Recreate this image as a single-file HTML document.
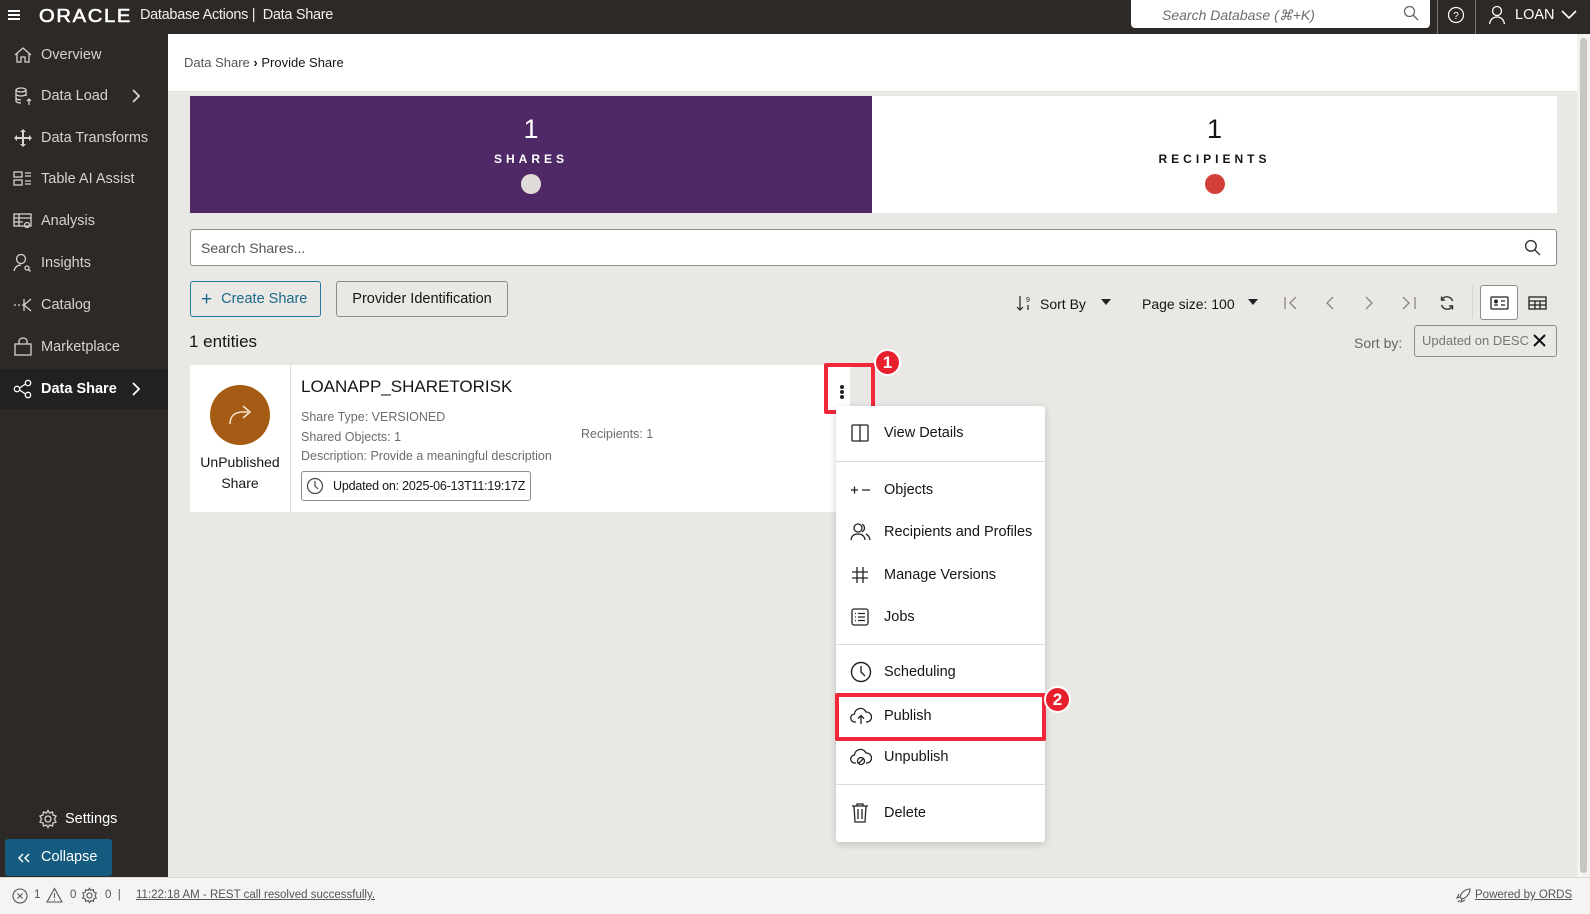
<!DOCTYPE html>
<html><head><meta charset="utf-8"><style>
*{box-sizing:border-box;margin:0;padding:0}
body{width:1590px;height:914px;overflow:hidden;font-family:"Liberation Sans",sans-serif;background:#eae8e5;position:relative;color:#161513}
.abs{position:absolute}
#top{left:0;top:0;width:1590px;height:34px;background:#2c2926;color:#fff}
#side{left:0;top:34px;width:168px;height:843px;background:#2c2926;color:#d6d2ce;font-size:14.5px}
.si{position:absolute;left:0;width:168px;height:40px;display:flex;align-items:center}
.si svg{position:absolute;left:13px}
.si span{position:absolute;left:41px}
.si .ch{position:absolute;left:133px;top:12px}
#status{left:0;top:877px;width:1590px;height:37px;background:#f5f4f2;border-top:1px solid #dcdad7;font-size:11.5px;color:#555}
.mi{position:absolute;left:0;width:209px;height:40px;display:flex;align-items:center;font-size:14.5px;color:#161513}
.mi svg{position:absolute;left:14px}
.mi span{position:absolute;left:48px}
.sep{position:absolute;left:0;width:209px;height:1px;background:#dedcd9}
.badge{position:absolute;width:27px;height:27px;border-radius:50%;background:#e8202e;color:#fff;font-weight:bold;font-size:17px;text-align:center;line-height:24px;border:2px solid #fff}
.rbox{position:absolute;border:4px solid #f0283a;border-radius:2px}
</style></head><body>
<div id="top" class="abs">
 <div class="abs" style="left:8px;top:10px;width:12px;height:2px;background:#fff;box-shadow:0 4px 0 #fff,0 8px 0 #fff"></div>
 <div class="abs" style="left:39px;top:6px;font-size:18px;letter-spacing:1.5px;transform:scaleX(1.12);transform-origin:left;-webkit-text-stroke:0.6px #fff">ORACLE</div>
 <div class="abs" style="left:140px;top:7px;font-size:14.5px;color:#f0eeeb;letter-spacing:-0.3px">Database Actions |&nbsp; Data Share</div>
 <div class="abs" style="left:1131px;top:0;width:299px;height:28px;background:#fff;border-radius:0 0 4px 4px"></div>
 <div class="abs" style="left:1162px;top:7px;font-size:14px;font-style:italic;color:#6f6c69">Search Database (⌘+K)</div>
 <svg class="abs" style="left:1403px;top:5px" width="16" height="16" viewBox="0 0 16 16" fill="none" stroke="#666" stroke-width="1.3"><circle cx="6.5" cy="6.5" r="5"/><path d="M10 10l5 5"/></svg>
 <div class="abs" style="left:1437px;top:0;width:1px;height:34px;background:#777"></div>
 <svg class="abs" style="left:1447px;top:6px" width="18" height="18" viewBox="0 0 18 18" fill="none" stroke="#fff" stroke-width="1.2"><circle cx="9" cy="9" r="7.5"/><text x="9" y="13" font-size="10" text-anchor="middle" fill="#fff" stroke="none" font-family="Liberation Sans">?</text></svg>
 <div class="abs" style="left:1475px;top:0;width:1px;height:34px;background:#777"></div>
 <svg class="abs" style="left:1488px;top:5px" width="18" height="20" viewBox="0 0 18 20" fill="none" stroke="#fff" stroke-width="1.3"><circle cx="9" cy="6" r="4.5"/><path d="M1.5 19c1-5 4-7 7.5-7s6.5 2 7.5 7"/></svg>
 <div class="abs" style="left:1515px;top:7px;font-size:14.5px">LOAN</div>
 <svg class="abs" style="left:1560px;top:9px" width="18" height="12" viewBox="0 0 18 12" fill="none" stroke="#fff" stroke-width="1.6"><path d="M2 2l7 7 7-7"/></svg>
</div>

<div id="side" class="abs">
 <div class="si" style="top:1px"><svg width="20" height="20" viewBox="0 0 20 20" fill="none" stroke="#d6d2ce" stroke-width="1.3"><path d="M2 10L10 3l8 7M4 8.5V17h4v-5h4v5h4V8.5"/></svg><span>Overview</span></div>
 <div class="si" style="top:42px"><svg width="20" height="20" viewBox="0 0 20 20" fill="none" stroke="#d6d2ce" stroke-width="1.3"><ellipse cx="8" cy="4" rx="5" ry="2"/><path d="M3 4v11c0 1 2 2 5 2M13 4v6M3 8c0 1 2 2 5 2s5-1 5-2M3 12c0 1 2 2 5 2"/><path d="M16 19v-6M14 15l2-2 2 2"/></svg><span>Data Load</span><svg class="ch" width="10" height="16" viewBox="0 0 10 16" fill="none" stroke="#d6d2ce" stroke-width="1.8" style="left:131px"><path d="M2 2l6 6-6 6"/></svg></div>
 <div class="si" style="top:84px"><svg width="20" height="20" viewBox="0 0 20 20" fill="#d6d2ce"><path d="M10 1l3 3h-2v5h5V7l3 3-3 3v-2h-5v5h2l-3 3-3-3h2v-5H4v2l-3-3 3-3v2h5V4H7z"/></svg><span>Data Transforms</span></div>
 <div class="si" style="top:125px"><svg width="20" height="20" viewBox="0 0 20 20" fill="none" stroke="#d6d2ce" stroke-width="1.3"><rect x="1" y="3" width="8" height="5"/><rect x="1" y="11" width="8" height="5"/><path d="M12 4h6M12 7h6M12 12h6M12 15h6"/></svg><span>Table AI Assist</span></div>
 <div class="si" style="top:167px"><svg width="20" height="20" viewBox="0 0 20 20" fill="none" stroke="#d6d2ce" stroke-width="1.3"><rect x="1" y="3" width="17" height="12"/><path d="M1 7h17M6 3v12M1 11h9"/><circle cx="14" cy="14" r="2.5"/></svg><span>Analysis</span></div>
 <div class="si" style="top:209px"><svg width="20" height="20" viewBox="0 0 20 20" fill="none" stroke="#d6d2ce" stroke-width="1.3"><circle cx="8" cy="6" r="4.5"/><path d="M1 18c1-4 3-6 7-6"/><circle cx="14" cy="15" r="2"/><path d="M15.5 16.5l2 2"/></svg><span>Insights</span></div>
 <div class="si" style="top:251px"><svg width="20" height="20" viewBox="0 0 20 20" fill="none" stroke="#d6d2ce" stroke-width="1.3"><path d="M1 10h2M5 10h2M9 10h2M11 4v12M18 4l-7 6 7 6"/></svg><span>Catalog</span></div>
 <div class="si" style="top:293px"><svg width="20" height="20" viewBox="0 0 20 20" fill="none" stroke="#d6d2ce" stroke-width="1.3"><rect x="2" y="7" width="16" height="11"/><path d="M6 7V4a4 3 0 0 1 8 0v3"/></svg><span>Marketplace</span></div>
 <div class="si" style="top:335px;background:#222020;color:#fff"><svg width="20" height="20" viewBox="0 0 20 20" fill="none" stroke="#fff" stroke-width="1.3"><circle cx="4" cy="10" r="2.7"/><circle cx="15" cy="4" r="2.7"/><circle cx="15" cy="16" r="2.7"/><path d="M6.5 9l6-4M6.5 11l6 4"/></svg><span style="font-weight:bold">Data Share</span><svg class="ch" width="10" height="16" viewBox="0 0 10 16" fill="none" stroke="#fff" stroke-width="1.8" style="left:131px"><path d="M2 2l6 6-6 6"/></svg></div>
 <svg class="abs" style="left:38px;top:775px" width="20" height="20" viewBox="0 0 20 20" fill="none" stroke="#d6d2ce" stroke-width="1.3"><circle cx="10" cy="10" r="3"/><path d="M10 1.5l1.5 2.5 3-1 .5 3 3 1-1.5 3 1.5 3-3 1-.5 3-3-1-1.5 2.5-1.5-2.5-3 1-.5-3-3-1 1.5-3-1.5-3 3-1 .5-3 3 1z"/></svg>
 <div class="abs" style="left:65px;top:777px;color:#fff">Settings</div>
 <div class="abs" style="left:5px;top:805px;width:107px;height:37px;background:#155b7f;border-radius:3px;color:#fff;font-size:14.5px;line-height:37px"><svg class="abs" style="left:12px;top:14px" width="14" height="10" viewBox="0 0 14 10" fill="none" stroke="#fff" stroke-width="1.5"><path d="M6 1L2 5l4 4M12 1L8 5l4 4"/></svg><span style="position:absolute;left:36px">Collapse</span></div>
</div>

<!-- main header -->
<div class="abs" style="left:168px;top:34px;width:1409px;height:58px;background:#fff;border-bottom:1px solid #e3e1de"></div>
<div class="abs" style="left:184px;top:55px;font-size:13px;color:#555">Data Share <b style="color:#222">&#x203A;</b> <span style="color:#161513">Provide Share</span></div>
<div class="abs" style="left:1577px;top:34px;width:13px;height:843px;background:#f3f2f0"></div>
<div class="abs" style="left:1580px;top:38px;width:7px;height:835px;background:#c8c6c3;border-radius:4px"></div>

<!-- stats -->
<div class="abs" style="left:190px;top:96px;width:682px;height:117px;background:#4f2966;color:#fff;text-align:center">
 <div style="font-size:27px;margin-top:18px">1</div>
 <div style="font-size:12px;font-weight:bold;letter-spacing:4px;margin-top:7px">SHARES</div>
 <div style="width:20px;height:20px;border-radius:50%;background:#e0dcd8;margin:8px auto 0"></div>
</div>
<div class="abs" style="left:872px;top:96px;width:685px;height:117px;background:#fff;text-align:center">
 <div style="font-size:27px;margin-top:18px">1</div>
 <div style="font-size:12px;font-weight:bold;letter-spacing:4px;margin-top:7px">RECIPIENTS</div>
 <div style="width:20px;height:20px;border-radius:50%;background:#d2403a;margin:8px auto 0"></div>
</div>

<!-- search -->
<div class="abs" style="left:190px;top:229px;width:1367px;height:37px;background:#fff;border:1px solid #8f8c89;border-radius:3px"></div>
<div class="abs" style="left:201px;top:240px;font-size:14px;color:#555">Search Shares...</div>
<svg class="abs" style="left:1524px;top:239px" width="17" height="17" viewBox="0 0 16 16" fill="none" stroke="#333" stroke-width="1.3"><circle cx="6.5" cy="6.5" r="5"/><path d="M10 10l5 5"/></svg>

<!-- buttons -->
<div class="abs" style="left:190px;top:281px;width:131px;height:36px;border:1px solid #227e9e;border-radius:3px;color:#1a6a8a;font-size:14.5px;line-height:34px"><span style="margin-left:10px;font-size:19px;vertical-align:-2px">+</span><span style="margin-left:9px">Create Share</span></div>
<div class="abs" style="left:336px;top:281px;width:172px;height:36px;border:1px solid #8f8c89;border-radius:3px;font-size:14.5px;line-height:34px;text-align:center">Provider Identification</div>

<!-- toolbar right -->
<svg class="abs" style="left:1015px;top:294px" width="18" height="18" viewBox="0 0 18 18" fill="none" stroke="#222" stroke-width="1.2"><path d="M5 2v14M2 13l3 3 3-3"/><text x="11" y="8" font-size="7" fill="#222" stroke="none" font-family="Liberation Sans">9</text><path d="M13 11v5"/></svg>
<div class="abs" style="left:1040px;top:296px;font-size:14px">Sort By</div>
<svg class="abs" style="left:1101px;top:299px" width="10" height="6"><path d="M0 0h10L5 6z" fill="#222"/></svg>
<div class="abs" style="left:1142px;top:296px;font-size:14px">Page size: 100</div>
<svg class="abs" style="left:1248px;top:299px" width="10" height="6"><path d="M0 0h10L5 6z" fill="#222"/></svg>
<svg class="abs" style="left:1282px;top:294px" width="160" height="18" viewBox="0 0 160 18" fill="none" stroke="#8a8784" stroke-width="1.3"><path d="M3 3v12M14 3l-6 6 6 6M51 3l-6 6 6 6M84 3l6 6-6 6M121 3l6 6-6 6M133 3v12"/></svg>
<svg class="abs" style="left:1438px;top:294px" width="18" height="18" viewBox="0 0 18 18" fill="none" stroke="#333" stroke-width="1.4"><path d="M14.5 7A6 6 0 0 0 3.5 6M3.5 11a6 6 0 0 0 11 1M3.5 2.5v3.5H7M14.5 15.5V12H11"/></svg>
<div class="abs" style="left:1472px;top:285px;width:1px;height:33px;background:#d8d6d3"></div>
<div class="abs" style="left:1480px;top:285px;width:38px;height:35px;background:#fff;border:1px solid #8f8c89;border-radius:3px"></div>
<svg class="abs" style="left:1490px;top:296px" width="19" height="14" viewBox="0 0 19 14" fill="none" stroke="#222" stroke-width="1.3"><rect x="1" y="1" width="17" height="12" rx="1"/><path d="M4 9h4M11 5h4M11 9h4"/><circle cx="6" cy="5.5" r="1.3" fill="#222"/></svg>
<svg class="abs" style="left:1528px;top:296px" width="19" height="14" viewBox="0 0 19 14" fill="none" stroke="#222" stroke-width="1.3"><rect x="1" y="1" width="17" height="12"/><path d="M1 5h17M1 9h17M7 5v8M12 5v8"/></svg>
<div class="abs" style="left:1354px;top:335px;font-size:14px;color:#666">Sort by:</div>
<div class="abs" style="left:1414px;top:325px;width:143px;height:32px;border:1px solid #8f8c89;border-radius:3px;font-size:13px;color:#777;line-height:30px;padding-left:7px;white-space:nowrap">Updated on DESC</div>
<svg class="abs" style="left:1533px;top:334px" width="13" height="13" viewBox="0 0 13 13" stroke="#111" stroke-width="2"><path d="M1 1l11 11M12 1L1 12"/></svg>

<div class="abs" style="left:189px;top:332px;font-size:17px">1 entities</div>

<!-- card -->
<div class="abs" style="left:190px;top:365px;width:660px;height:147px;background:#fff"></div>
<div class="abs" style="left:290px;top:365px;width:1px;height:147px;background:#e0dedb"></div>
<div class="abs" style="left:210px;top:385px;width:60px;height:60px;border-radius:50%;background:#a55b13"></div>
<svg class="abs" style="left:225px;top:400px" width="30" height="30" viewBox="0 0 30 30" fill="none" stroke="#f3e3cf" stroke-width="1.6"><path d="M5 24c0-8 5-12 13-12h5M18 6l7 6-7 6"/></svg>
<div class="abs" style="left:190px;top:452px;width:100px;text-align:center;font-size:14px;line-height:21px">UnPublished<br>Share</div>
<div class="abs" style="left:301px;top:377px;font-size:17px">LOANAPP_SHARETORISK</div>
<div class="abs" style="left:301px;top:408px;font-size:12.5px;color:#6f6c69;line-height:19.5px">Share Type: VERSIONED<br>Shared Objects: 1<br>Description: Provide a meaningful description</div>
<div class="abs" style="left:581px;top:427px;font-size:12.5px;color:#6f6c69">Recipients: 1</div>
<div class="abs" style="left:301px;top:471px;width:230px;height:30px;border:1px solid #8f8c89;border-radius:3px;font-size:12.5px;line-height:28px;padding-left:31px;white-space:nowrap;letter-spacing:-0.2px">Updated on: 2025-06-13T11:19:17Z</div>
<svg class="abs" style="left:306px;top:477px" width="18" height="18" viewBox="0 0 18 18" fill="none" stroke="#444" stroke-width="1.2"><circle cx="9" cy="9" r="7.5"/><path d="M9 4v5l3 3"/></svg>

<!-- kebab + box 1 -->
<div class="abs" style="left:840px;top:385px;width:4px;height:4px;border-radius:50%;background:#222;box-shadow:0 5px 0 #222,0 10px 0 #222"></div>
<div class="rbox" style="left:824px;top:363px;width:51px;height:51px"></div>
<div class="badge" style="left:874px;top:349px">1</div>

<!-- menu -->
<div class="abs" style="left:836px;top:406px;width:209px;height:436px;background:#fff;border-radius:3px;box-shadow:0 2px 8px rgba(0,0,0,.18)">
 <div class="mi" style="top:7px"><svg width="20" height="20" viewBox="0 0 20 20" fill="none" stroke="#222" stroke-width="1.3"><rect x="2" y="2" width="16" height="16" rx="1"/><path d="M10 2v16"/></svg><span>View Details</span></div>
 <div class="sep" style="top:55px"></div>
 <div class="mi" style="top:64px"><svg width="22" height="20" viewBox="0 0 22 20" fill="none" stroke="#222" stroke-width="1.3"><path d="M1 10h7M4.5 6.5v7M12 10h8"/></svg><span>Objects</span></div>
 <div class="mi" style="top:106px"><svg width="22" height="20" viewBox="0 0 22 20" fill="none" stroke="#222" stroke-width="1.3"><circle cx="8" cy="6" r="4"/><path d="M1 18c.5-4 3-6 7-6s6.5 2 7 6"/><path d="M12 2.3a4 4 0 0 1 0 7.4M16 12c2 1 3.5 3 4 6"/></svg><span>Recipients and Profiles</span></div>
 <div class="mi" style="top:149px"><svg width="20" height="20" viewBox="0 0 20 20" fill="none" stroke="#222" stroke-width="1.3"><path d="M7 2v16M13 2v16M2 7h16M2 13h16"/></svg><span>Manage Versions</span></div>
 <div class="mi" style="top:191px"><svg width="20" height="20" viewBox="0 0 20 20" fill="none" stroke="#222" stroke-width="1.3"><rect x="2" y="2" width="16" height="16" rx="2"/><path d="M5 6.5h1M8 6.5h7M5 10h1M8 10h7M5 13.5h1M8 13.5h7"/></svg><span>Jobs</span></div>
 <div class="sep" style="top:238px"></div>
 <div class="mi" style="top:246px"><svg width="22" height="22" viewBox="0 0 22 22" fill="none" stroke="#222" stroke-width="1.4"><circle cx="11" cy="11" r="9.5"/><path d="M11 5v6l4 4"/></svg><span>Scheduling</span></div>
 <div class="mi" style="top:290px"><svg width="22" height="20" viewBox="0 0 22 20" fill="none" stroke="#222" stroke-width="1.3"><path d="M6 16H5a4 4 0 0 1-.5-8A6 6 0 0 1 16 6a4.5 4.5 0 0 1 1 10h-1"/><path d="M11 18v-8M8 12.5l3-3 3 3"/></svg><span>Publish</span></div>
 <div class="mi" style="top:331px"><svg width="22" height="20" viewBox="0 0 22 20" fill="none" stroke="#222" stroke-width="1.3"><path d="M6 16H5a4 4 0 0 1-.5-8A6 6 0 0 1 16 6a4.5 4.5 0 0 1 1 10h-1"/><circle cx="11" cy="14" r="3.5"/><path d="M8.5 16.5l5-5"/></svg><span>Unpublish</span></div>
 <div class="sep" style="top:378px"></div>
 <div class="mi" style="top:387px"><svg width="20" height="22" viewBox="0 0 20 22" fill="none" stroke="#222" stroke-width="1.3"><path d="M2 4h16M7 4V2h6v2M4 4l1 16h10l1-16M8 7v10M12 7v10"/></svg><span>Delete</span></div>
</div>
<div class="rbox" style="left:835px;top:693px;width:211px;height:48px"></div>
<div class="badge" style="left:1044px;top:686px">2</div>

<!-- status -->
<div id="status" class="abs">
 <svg class="abs" style="left:12px;top:10px" width="16" height="16" viewBox="0 0 16 16" fill="none" stroke="#555" stroke-width="1.1"><circle cx="8" cy="8" r="7"/><path d="M5.5 5.5l5 5M10.5 5.5l-5 5"/></svg>
 <span class="abs" style="left:34px;top:11px">1</span>
 <svg class="abs" style="left:46px;top:9px" width="17" height="16" viewBox="0 0 17 16" fill="none" stroke="#555" stroke-width="1.1"><path d="M8.5 1.5L16 15H1z M8.5 6v5M8.5 12.5v1"/></svg>
 <span class="abs" style="left:70px;top:11px">0</span>
 <svg class="abs" style="left:81px;top:9px" width="17" height="17" viewBox="0 0 20 20" fill="none" stroke="#555" stroke-width="1.3"><circle cx="10" cy="10" r="3"/><path d="M10 1.5l1.5 2.5 3-1 .5 3 3 1-1.5 3 1.5 3-3 1-.5 3-3-1-1.5 2.5-1.5-2.5-3 1-.5-3-3-1 1.5-3-1.5-3 3-1 .5-3 3 1z"/></svg>
 <span class="abs" style="left:105px;top:11px">0 &nbsp;|</span>
 <span class="abs" style="left:136px;top:11px;text-decoration:underline">11:22:18 AM - REST call resolved successfully.</span>
 <svg class="abs" style="left:1456px;top:10px" width="15" height="15" viewBox="0 0 15 15" fill="none" stroke="#555" stroke-width="1.1"><path d="M14 1C9 1 5 5 4 9l2 2c4-1 8-5 8-10zM4 9l-3 1 2-4M6 11l-1 3 4-2M2 14l2-2"/></svg>
 <span class="abs" style="left:1475px;top:11px;text-decoration:underline">Powered by ORDS</span>
</div>
</body></html>
